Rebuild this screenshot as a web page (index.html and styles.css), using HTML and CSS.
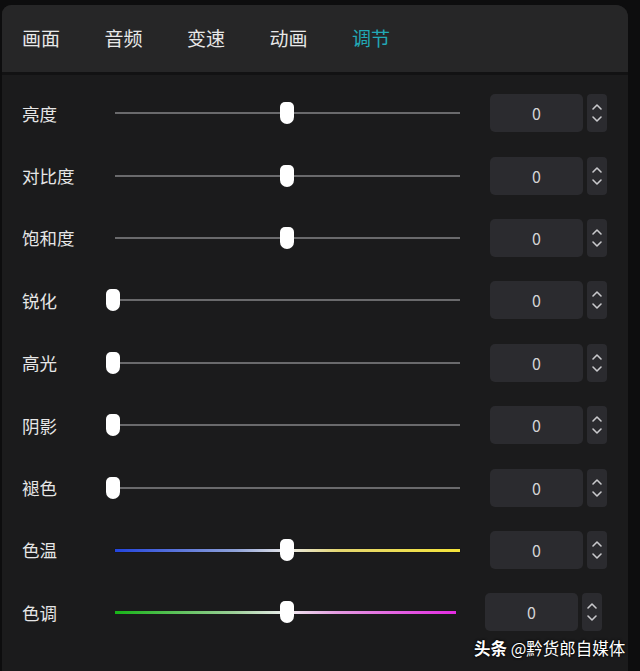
FILE: index.html
```html
<!DOCTYPE html>
<html lang="zh">
<head>
<meta charset="utf-8">
<link rel="stylesheet" href="styles.css">
</head>
<body>
<div class="panel">
  <div class="tabs">
    <span class="tab">画面</span>
    <span class="tab">音频</span>
    <span class="tab">变速</span>
    <span class="tab">动画</span>
    <span class="tab active">调节</span>
  </div>
  <div class="body">
    <div class="row"><span class="label">亮度</span><div class="slider"><div class="track"></div><div class="thumb mid"></div></div><div class="value">0</div><div class="spin"><svg viewBox="0 0 20 38" width="20" height="38"><path d="M6 15 L10 11 L14 15 M6 23 L10 27 L14 23" fill="none" stroke="#c9c9cc" stroke-width="1.6" stroke-linecap="round" stroke-linejoin="round"/></svg></div></div>
    <div class="row"><span class="label">对比度</span><div class="slider"><div class="track"></div><div class="thumb mid"></div></div><div class="value">0</div><div class="spin"><svg viewBox="0 0 20 38" width="20" height="38"><path d="M6 15 L10 11 L14 15 M6 23 L10 27 L14 23" fill="none" stroke="#c9c9cc" stroke-width="1.6" stroke-linecap="round" stroke-linejoin="round"/></svg></div></div>
    <div class="row"><span class="label">饱和度</span><div class="slider"><div class="track"></div><div class="thumb mid"></div></div><div class="value">0</div><div class="spin"><svg viewBox="0 0 20 38" width="20" height="38"><path d="M6 15 L10 11 L14 15 M6 23 L10 27 L14 23" fill="none" stroke="#c9c9cc" stroke-width="1.6" stroke-linecap="round" stroke-linejoin="round"/></svg></div></div>
    <div class="row"><span class="label">锐化</span><div class="slider"><div class="track"></div><div class="thumb start"></div></div><div class="value">0</div><div class="spin"><svg viewBox="0 0 20 38" width="20" height="38"><path d="M6 15 L10 11 L14 15 M6 23 L10 27 L14 23" fill="none" stroke="#c9c9cc" stroke-width="1.6" stroke-linecap="round" stroke-linejoin="round"/></svg></div></div>
    <div class="row"><span class="label">高光</span><div class="slider"><div class="track"></div><div class="thumb start"></div></div><div class="value">0</div><div class="spin"><svg viewBox="0 0 20 38" width="20" height="38"><path d="M6 15 L10 11 L14 15 M6 23 L10 27 L14 23" fill="none" stroke="#c9c9cc" stroke-width="1.6" stroke-linecap="round" stroke-linejoin="round"/></svg></div></div>
    <div class="row"><span class="label">阴影</span><div class="slider"><div class="track"></div><div class="thumb start"></div></div><div class="value">0</div><div class="spin"><svg viewBox="0 0 20 38" width="20" height="38"><path d="M6 15 L10 11 L14 15 M6 23 L10 27 L14 23" fill="none" stroke="#c9c9cc" stroke-width="1.6" stroke-linecap="round" stroke-linejoin="round"/></svg></div></div>
    <div class="row"><span class="label">褪色</span><div class="slider"><div class="track"></div><div class="thumb start"></div></div><div class="value">0</div><div class="spin"><svg viewBox="0 0 20 38" width="20" height="38"><path d="M6 15 L10 11 L14 15 M6 23 L10 27 L14 23" fill="none" stroke="#c9c9cc" stroke-width="1.6" stroke-linecap="round" stroke-linejoin="round"/></svg></div></div>
    <div class="row"><span class="label">色温</span><div class="slider"><div class="track temp"></div><div class="thumb mid"></div></div><div class="value">0</div><div class="spin"><svg viewBox="0 0 20 38" width="20" height="38"><path d="M6 15 L10 11 L14 15 M6 23 L10 27 L14 23" fill="none" stroke="#c9c9cc" stroke-width="1.6" stroke-linecap="round" stroke-linejoin="round"/></svg></div></div>
    <div class="row shifted"><span class="label">色调</span><div class="slider"><div class="track tint"></div><div class="thumb mid"></div></div><div class="value">0</div><div class="spin"><svg viewBox="0 0 20 38" width="20" height="38"><path d="M6 15 L10 11 L14 15 M6 23 L10 27 L14 23" fill="none" stroke="#c9c9cc" stroke-width="1.6" stroke-linecap="round" stroke-linejoin="round"/></svg></div></div>
  </div>
</div>
<div class="watermark"><b>头条</b> @黔货郎自媒体</div>
</body>
</html>
```
FILE: styles.css
```css
html, body {
  margin: 0;
  padding: 0;
  background: #0d0d0e;
  width: 640px;
  height: 671px;
  overflow: hidden;
  font-family: "Noto Sans CJK SC", "Noto Sans", sans-serif;
  color: #e6e6e6;
}
body {
  position: relative;
  padding: 5px 0 0 2px;
  box-sizing: border-box;
}
.panel {
  width: 626px;
  height: 666px;
  border-radius: 9px 12px 0 0;
  background: #1b1b1c;
  overflow: hidden;
  display: flex;
  flex-direction: column;
}
.tabs {
  height: 70px;
  background: #262627;
  border-bottom: 3px solid #121213;
  display: flex;
  align-items: center;
  padding-left: 20px;
  box-sizing: border-box;
  flex-shrink: 0;
}
.tab {
  width: 82.5px;
  font-size: 19px;
  line-height: 24px;
  color: #e8e8e8;
  margin-top: -2px;
}
.tab.active {
  color: #22a9b6;
}
.body {
  padding-top: 7px;
  display: flex;
  flex-direction: column;
}
.row {
  height: 62.4px;
  display: flex;
  align-items: center;
  padding: 0 21px 0 20px;
}
.label {
  width: 93px;
  font-size: 17.5px;
  color: #e6e6e6;
  flex-shrink: 0;
}
.slider {
  position: relative;
  width: 345px;
  height: 24px;
  flex-shrink: 0;
}
.track {
  position: absolute;
  left: 0;
  right: 0;
  top: 11px;
  height: 2px;
  background: #6a6a6c;
}
.track.temp {
  height: 3px;
  background: linear-gradient(to right, #2244dd 0%, #8fa2d8 35%, #e8e8e8 50%, #e4d670 65%, #f4e43a 100%);
  box-shadow: 0 0 1px #000;
}
.track.tint {
  height: 3px;
  background: linear-gradient(to right, #18b418 0%, #9ccf98 35%, #eeeeee 50%, #e39be0 65%, #e42be2 100%);
}
.thumb {
  position: absolute;
  top: 1px;
  width: 14px;
  height: 22px;
  background: #ffffff;
  border-radius: 5px 5px 7px 7px;
}
.thumb.mid {
  left: 165px;
}
.thumb.start {
  left: -9px;
}
.value {
  margin-left: 30px;
  width: 93px;
  height: 38px;
  background: #2b2b2f;
  border-radius: 5px;
  display: flex;
  align-items: center;
  justify-content: center;
  font-size: 16px;
  color: #d4d4d6;
  flex-shrink: 0;
}
.spin {
  margin-left: 4px;
  width: 20px;
  height: 38px;
  background: #2b2b2f;
  border-radius: 4px;
  flex-shrink: 0;
}
.spin svg {
  display: block;
}
.row.shifted .slider {
  width: 341px;
}
.row.shifted .value {
  margin-left: 29px;
}
.watermark {
  position: absolute;
  left: 474px;
  top: 636px;
  font-size: 16.5px;
  color: #ffffff;
  text-shadow: 0 0 2px #000, 0 0 3px #000;
  white-space: nowrap;
}
.watermark b {
  font-weight: 700;
}
```
